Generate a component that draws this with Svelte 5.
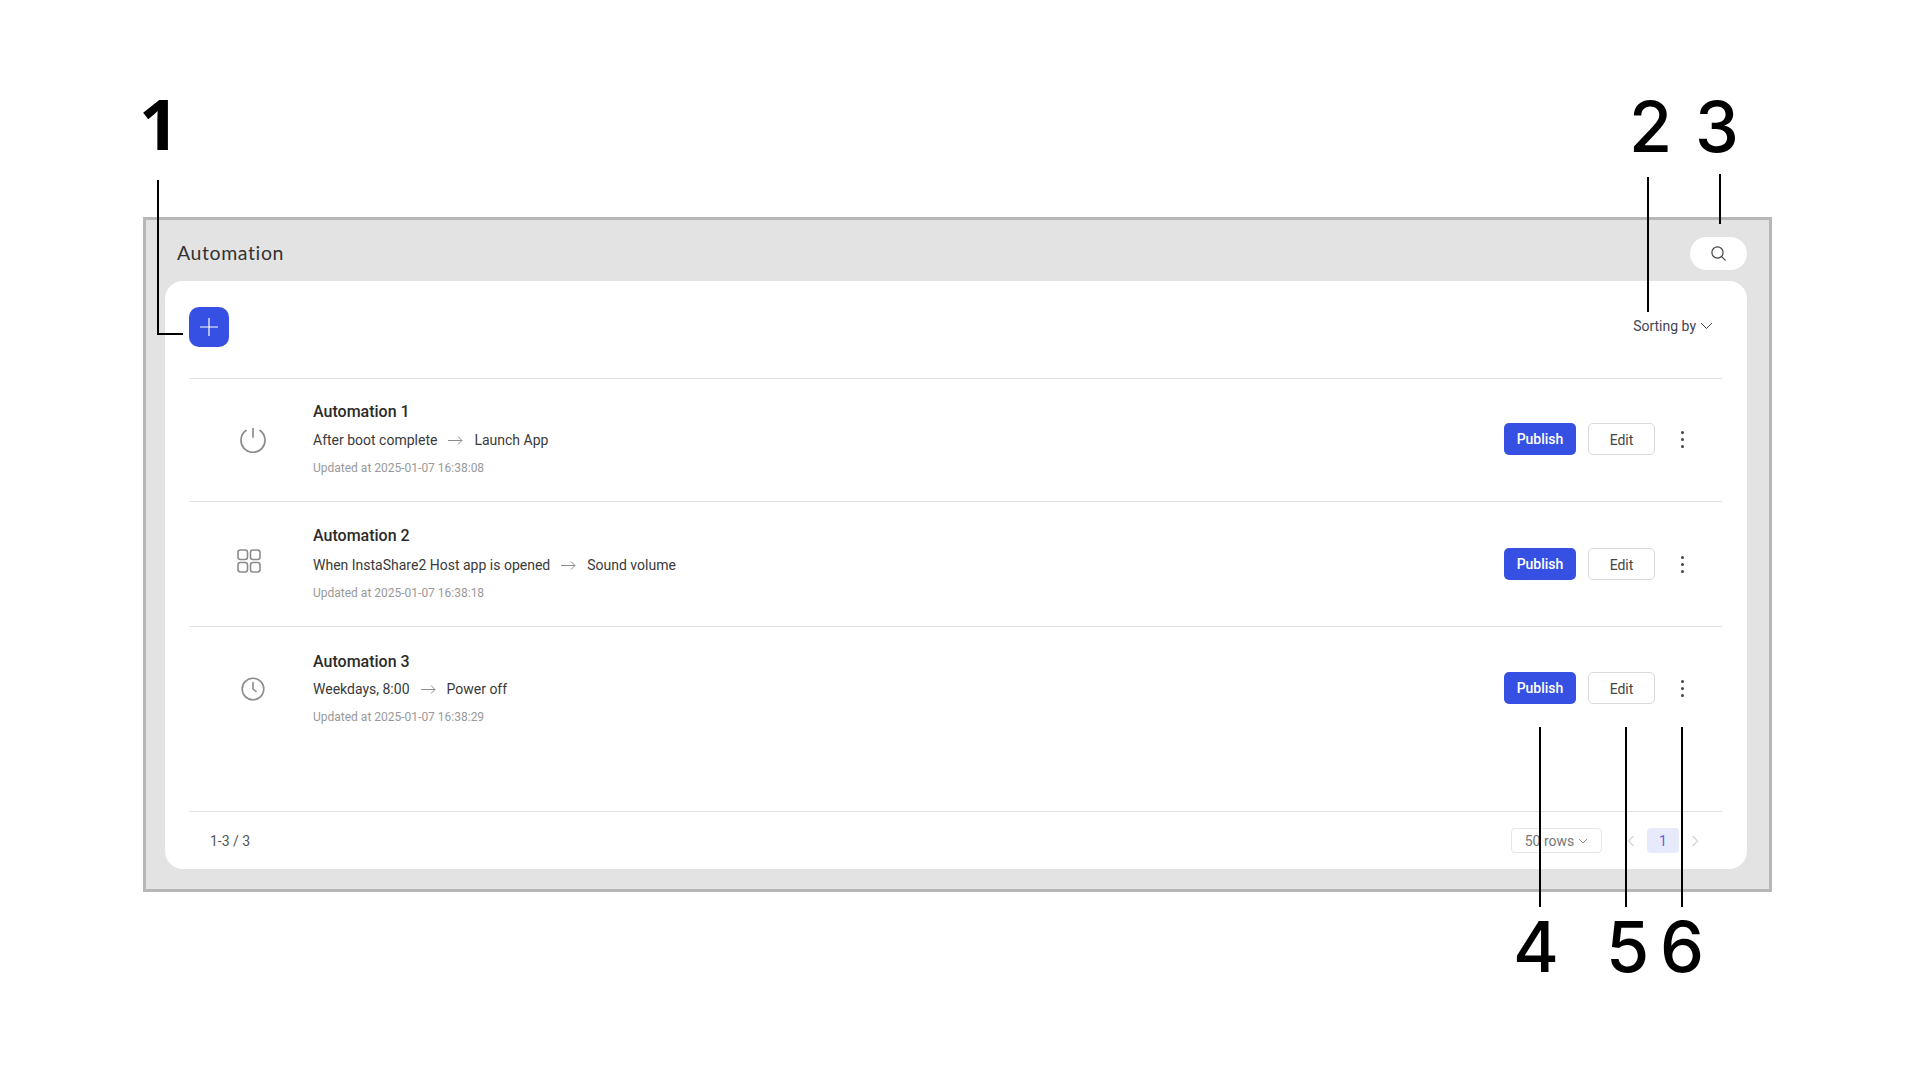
<script lang="ts">
  const rows = [
    { id: "r1", icon: "power", name: "Automation 1", from: "After boot complete", to: "Launch App", updated: "Updated at 2025-01-07 16:38:08" },
    { id: "r2", icon: "grid", name: "Automation 2", from: "When InstaShare2 Host app is opened", to: "Sound volume", updated: "Updated at 2025-01-07 16:38:18" },
    { id: "r3", icon: "clock", name: "Automation 3", from: "Weekdays, 8:00", to: "Power off", updated: "Updated at 2025-01-07 16:38:29" },
  ];
  const marks = ["1", "2", "3", "4", "5", "6"];
  const leaders = ["l1", "l1b", "l2", "l3", "l4", "l5", "l6"];
</script>

<main class="page">
  <section class="frame">
    <header class="head">
      <h1>Automation</h1>
      <button class="search" aria-label="Search">
        <svg width="17" height="17" viewBox="0 0 17 17" fill="none" stroke="#444" stroke-width="1.2">
          <circle cx="7.5" cy="7.5" r="5.6" />
          <path d="M11.6 11.6L15.2 15.2" stroke-linecap="round" />
        </svg>
      </button>
    </header>

    <div class="card">
      <div class="toolbar">
        <button class="add" aria-label="Add">
          <svg width="20" height="20" viewBox="0 0 20 20" stroke="#fff" stroke-width="1.2"><path d="M10 1V19M1 10H19" /></svg>
        </button>
        <button class="sort">
          Sorting by
          <svg width="13" height="8" viewBox="0 0 13 8" fill="none" stroke="#445" stroke-width="1"><path d="M1 1L6.5 6.5L12 1" /></svg>
        </button>
      </div>

      <div class="list">
        {#each rows as row}
          <article class="row {row.id}">
            <div class="icon">
              {#if row.icon === "power"}
                <svg width="28" height="28" viewBox="0 0 28 28" fill="none" stroke="#8c8c8c" stroke-width="1.7" stroke-linecap="round">
                  <path d="M7 5.55A12 12 0 1 0 21 5.55" />
                  <path d="M14 3.5V12" />
                </svg>
              {:else if row.icon === "grid"}
                <svg width="24" height="24" viewBox="0 0 24 24" fill="none" stroke="#8c8c8c" stroke-width="1.6">
                  <rect x="1" y="1" width="9.5" height="9.5" rx="2.4" />
                  <rect x="13.5" y="1" width="9.5" height="9.5" rx="2.4" />
                  <rect x="1" y="13.5" width="9.5" height="9.5" rx="2.4" />
                  <rect x="13.5" y="13.5" width="9.5" height="9.5" rx="2.4" />
                </svg>
              {:else}
                <svg width="24" height="24" viewBox="0 0 24 24" fill="none" stroke="#8c8c8c" stroke-width="1.6" stroke-linecap="round">
                  <circle cx="12" cy="12" r="10.8" />
                  <path d="M12 5.5V12L15 14.5" />
                </svg>
              {/if}
            </div>
            <div class="text">
              <div class="name">{row.name}</div>
              <div class="flow">
                <span>{row.from}</span>
                <svg width="15" height="10" viewBox="0 0 15 10" fill="none" stroke="#8c8c8c" stroke-width="1"><path d="M0 5.5H14M10 1.5L14 5.5L10 9.5" /></svg>
                <span>{row.to}</span>
              </div>
              <div class="updated">{row.updated}</div>
            </div>
            <div class="actions">
              <button class="publish">Publish</button>
              <button class="edit">Edit</button>
              <button class="more" aria-label="More"><i></i><i></i><i></i></button>
            </div>
          </article>
        {/each}
      </div>

      <footer class="foot">
        <span class="count">1-3 / 3</span>
        <div class="pager">
          <button class="size">
            50 rows
            <svg width="10" height="6" viewBox="0 0 10 6" fill="none" stroke="#999" stroke-width="1"><path d="M1 1L5 5L9 1" /></svg>
          </button>
          <svg class="prev" width="8" height="12" viewBox="0 0 8 12" fill="none" stroke="#d4d4d4" stroke-width="1.2"><path d="M6.5 1L1.5 6L6.5 11" /></svg>
          <span class="current">1</span>
          <svg class="next" width="8" height="12" viewBox="0 0 8 12" fill="none" stroke="#d4d4d4" stroke-width="1.2"><path d="M1.5 1L6.5 6L1.5 11" /></svg>
        </div>
      </footer>
    </div>
  </section>

  <!-- callouts sit over the screenshot -->
  {#each marks as mark, i}
    <span class="mark m{i + 1}">{mark}</span>
  {/each}
  {#each leaders as leader}
    <span class="leader {leader}"></span>
  {/each}
</main>

<style>
  :global(body) {
    margin: 0;
    background: #fff;
  }
  .page {
    position: relative;
    width: 1921px;
    height: 1081px;
    box-sizing: border-box;
    padding: 217px 0 0 143px;
    font-family: Roboto, "Liberation Sans", sans-serif;
    color: #333;
  }
  button {
    font: inherit;
    color: inherit;
    background: none;
    border: none;
    padding: 0;
  }
  .frame {
    box-sizing: border-box;
    width: 1629px;
    height: 675px;
    border: 3px solid #b7b7b7;
    background: #e3e3e3;
    display: flex;
    flex-direction: column;
    padding: 0 22px 20px 19px;
  }
  .head {
    height: 61px;
    flex: none;
    display: flex;
    align-items: center;
    justify-content: space-between;
    box-sizing: border-box;
    padding: 0 0 0 12px;
  }
  h1 {
    margin: 3px 0 0;
    font: 400 19.5px Lato, sans-serif;
    color: #333;
    letter-spacing: 0.6px;
  }
  .search {
    width: 57px;
    height: 33px;
    border-radius: 17px;
    background: #fff;
    display: flex;
    align-items: center;
    justify-content: center;
    margin-top: 5px;
  }
  .card {
    flex: 1;
    background: #fff;
    border-radius: 18px;
    display: flex;
    flex-direction: column;
    padding: 0 25px 0 24px;
  }
  .toolbar {
    height: 97px;
    flex: none;
    display: flex;
    align-items: flex-start;
    justify-content: space-between;
    border-bottom: 1px solid #e2e2e2;
  }
  .add {
    width: 40px;
    height: 40px;
    margin-top: 26px;
    border-radius: 10px;
    background: #3650e4;
    display: flex;
    align-items: center;
    justify-content: center;
  }
  .sort {
    margin: 36px 9px 0 0;
    font-size: 14px;
    color: #445;
    display: flex;
    align-items: center;
    gap: 4px;
    height: 18px;
  }
  .list {
    flex: 1;
    display: flex;
    flex-direction: column;
  }
  .row {
    display: flex;
    height: 123px;
    box-sizing: border-box;
    border-bottom: 1px solid #e2e2e2;
  }
  .row.r2 {
    height: 125px;
  }
  .row:last-child {
    border-bottom: none;
  }
  .icon {
    width: 124px;
    flex: none;
    display: flex;
    justify-content: center;
    align-items: flex-start;
    box-sizing: border-box;
    padding-left: 4px;
  }
  .r1 .icon { padding-top: 46px; }
  .r2 .icon { padding-top: 47px; padding-right: 8px; }
  .r3 .icon { padding-top: 50px; }
  .text {
    flex: 1;
    display: flex;
    flex-direction: column;
  }
  .r1 .text { padding-top: 23px; }
  .r2 .text { padding-top: 24px; }
  .r3 .text { padding-top: 25px; }
  .name {
    font-size: 16px;
    font-weight: 500;
    line-height: 20px;
    color: #2b2b2b;
  }
  .flow {
    margin-top: 8px;
    font-size: 14px;
    line-height: 20px;
    display: flex;
    align-items: center;
    gap: 11px;
    color: #3a3a3a;
  }
  .r2 .flow {
    margin-top: 9px;
  }
  .r3 .flow {
    margin-top: 7px;
  }
  .updated {
    margin-top: 9px;
    font-size: 12px;
    line-height: 18px;
    color: #999;
  }
  .actions {
    display: flex;
    align-items: flex-start;
    flex: none;
    width: 218px;
  }
  .r1 .actions { padding-top: 44px; }
  .r2 .actions { padding-top: 46px; }
  .r3 .actions { padding-top: 45px; }
  .publish {
    width: 72px;
    height: 32px;
    border-radius: 5px;
    background: #3650e4;
    color: #fff;
    font-size: 14px;
    font-weight: 500;
  }
  .edit {
    width: 67px;
    height: 32px;
    margin-left: 12px;
    box-sizing: border-box;
    border: 1px solid #d9d9d9;
    border-radius: 5px;
    font-size: 14px;
    color: #444;
    padding-top: 1px;
  }
  .more {
    width: 12px;
    height: 32px;
    margin-left: 21px;
    display: flex;
    flex-direction: column;
    align-items: center;
    justify-content: center;
    gap: 4px;
  }
  .more i {
    display: block;
    width: 3px;
    height: 3px;
    border-radius: 50%;
    background: #444;
  }
  .foot {
    flex: none;
    height: 58px;
    box-sizing: border-box;
    border-top: 1px solid #e2e2e2;
    display: flex;
    justify-content: space-between;
    align-items: flex-start;
  }
  .count {
    margin: 19px 0 0 21px;
    font-size: 14px;
    line-height: 20px;
    color: #555;
  }
  .pager {
    margin: 16px 23px 0 0;
    display: flex;
    align-items: center;
  }
  .size {
    box-sizing: border-box;
    width: 91px;
    height: 25px;
    border: 1px solid #e6e6e6;
    border-radius: 4px;
    font-size: 14px;
    color: #777;
    display: flex;
    align-items: center;
    justify-content: center;
    gap: 4px;
  }
  .prev { margin-left: 25px; }
  .current {
    width: 32px;
    height: 25px;
    margin-left: 12px;
    border-radius: 4px;
    background: #e7eafb;
    color: #5d5fe0;
    font-size: 14px;
    display: flex;
    align-items: center;
    justify-content: center;
  }
  .next { margin-left: 12px; }

  .mark {
    position: absolute;
    font-family: Inter, sans-serif;
    font-size: 70px;
    font-weight: 550;
    line-height: 70px;
    color: #000;
  }
  .m1 { left: 139px; top: 88px; font-family: "Open Sans", sans-serif; font-weight: 700; }
  .m2 { left: 1629px; top: 92px; }
  .m3 { left: 1695px; top: 92px; }
  .m4 { left: 1513px; top: 912px; }
  .m5 { left: 1606px; top: 912px; }
  .m6 { left: 1660px; top: 912px; }
  .leader {
    position: absolute;
    background: #000;
    width: 2px;
  }
  .l1 { left: 157px; top: 180px; height: 155px; }
  .l1b { left: 157px; top: 333px; width: 26px; height: 2px; }
  .l2 { left: 1647px; top: 177px; height: 135px; }
  .l3 { left: 1719px; top: 174px; height: 50px; }
  .l4 { left: 1539px; top: 727px; height: 180px; }
  .l5 { left: 1625px; top: 727px; height: 180px; }
  .l6 { left: 1681px; top: 727px; height: 180px; }
</style>
